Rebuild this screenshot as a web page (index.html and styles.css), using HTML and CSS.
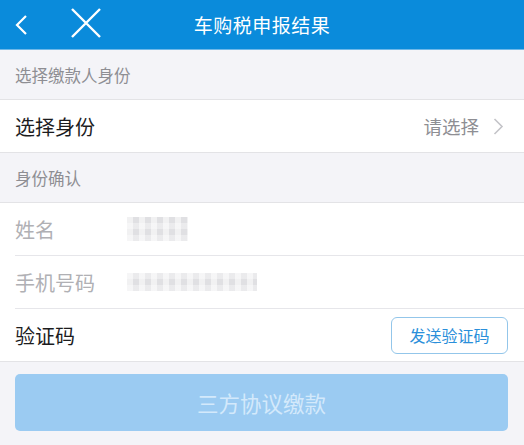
FILE: index.html
```html
<!DOCTYPE html>
<html lang="zh-CN">
<head>
  <meta charset="UTF-8" />
  <meta name="viewport" content="width=device-width, initial-scale=1.0" />
  <title>车购税申报结果</title>
  <link rel="stylesheet" href="styles.css">
</head>
<body>
  <div class="header">
    <div class="nav-icons">
      <svg class="icon-back" width="14" height="22" viewBox="0 0 14 22">
        <path d="M12 2 L3 11 L12 20" fill="none" stroke="#fff" stroke-width="2.2" />
      </svg>
      <svg class="icon-close" width="32" height="32" viewBox="0 0 32 32">
        <path d="M2 2 L30 30 M30 2 L2 30" fill="none" stroke="#fff" stroke-width="2.4" />
      </svg>
    </div>
    <div class="title">车购税申报结果</div>
  </div>

  <div class="section-title">选择缴款人身份</div>
  <div class="group">
    <div class="row">
      <span class="label dark">选择身份</span>
      <span class="picker">请选择
        <svg width="11" height="17" viewBox="0 0 11 17">
          <path d="M1.5 1 L9 8.5 L1.5 16" fill="none" stroke="#c4c4c8" stroke-width="1.6" />
        </svg>
      </span>
    </div>
  </div>

  <div class="section-title">身份确认</div>
  <div class="group">
    <div class="row line">
      <span class="label">姓名</span>
      <span class="blur blur-name"></span>
    </div>
    <div class="row line">
      <span class="label">手机号码</span>
      <span class="blur blur-phone"></span>
    </div>
    <div class="row">
      <span class="label dark">验证码</span>
      <button class="send">发送验证码</button>
    </div>
  </div>

  <div class="actions">
    <button class="pay" disabled>三方协议缴款</button>
  </div>
</body>
</html>
```

FILE: styles.css
```css
body {
  margin: 0;
  font-family: "Noto Sans CJK SC", "Noto Sans", sans-serif;
  background: #f4f4f8;
  color: #222;
}

.header {
  position: relative;
  height: 49px;
  background: #0a8bdb;
  border-bottom: 1px solid #6fb8e8;
  display: flex;
  align-items: center;
  justify-content: center;
}

.nav-icons {
  position: absolute;
  left: 0;
  top: 0;
  height: 49px;
  display: flex;
  align-items: center;
}

.icon-back {
  margin-left: 14px;
}

.icon-close {
  margin-left: 42px;
  margin-top: -4px;
}

.title {
  color: #fff;
  font-size: 19px;
  letter-spacing: 0.5px;
}

.section-title {
  height: 49px;
  padding: 0 15px;
  display: flex;
  align-items: center;
  font-size: 16.5px;
  color: #8e8e93;
  border-bottom: 1px solid #e3e3e6;
}

.group {
  background: #fff;
  border-bottom: 1px solid #e3e3e6;
}

.row {
  height: 52px;
  margin-left: 15px;
  padding-right: 16px;
  display: flex;
  align-items: center;
}

.row.line {
  border-bottom: 1px solid #e6e6ea;
}

.label {
  font-size: 20px;
  color: #b0b0b4;
  width: 112px;
}

.label.dark {
  color: #1c1c1e;
}

.picker {
  margin-left: auto;
  display: flex;
  align-items: center;
  gap: 14px;
  font-size: 18.5px;
  color: #8e8e93;
  margin-right: 4px;
}

.blur {
  height: 24px;
  background:
    repeating-linear-gradient(90deg, rgba(255,255,255,0.55) 0 6px, rgba(255,255,255,0) 6px 12px),
    repeating-linear-gradient(0deg, rgba(255,255,255,0.35) 0 6px, rgba(255,255,255,0) 6px 12px),
    #e0e0e3;
  filter: blur(0.6px);
}

.blur-name {
  width: 61px;
}

.blur-phone {
  width: 130px;
  height: 18px;
}

.send {
  margin-left: auto;
  width: 117px;
  height: 37px;
  background: #fff;
  border: 1px solid #93c6ea;
  border-radius: 6px;
  color: #2a8fda;
  font-family: inherit;
  font-size: 16px;
}

.actions {
  padding: 12px 16px 0 15px;
}

.pay {
  width: 100%;
  height: 57px;
  border: none;
  border-radius: 5px;
  background: #9bcbf2;
  color: #d3e9fb;
  font-family: inherit;
  font-size: 21.5px;
}
```
